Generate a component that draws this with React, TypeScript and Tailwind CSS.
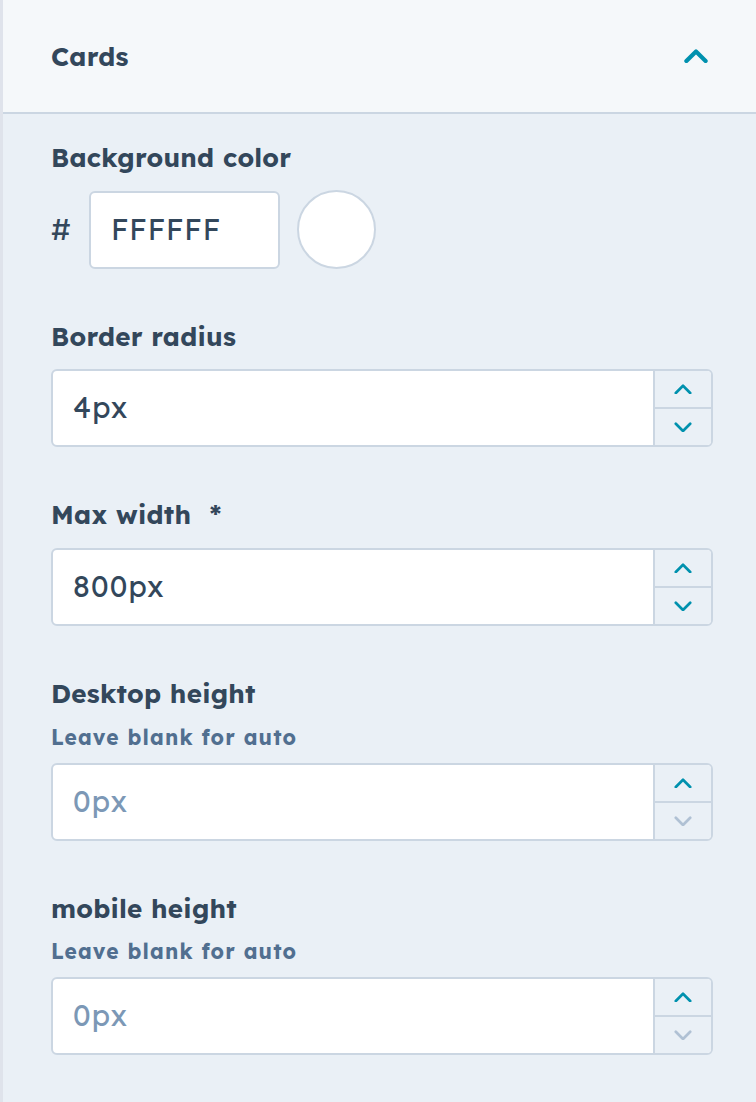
import React from "react";

const Chevron = ({ up, color, size = 18, stroke = 3 }: { up: boolean; color: string; size?: number; stroke?: number }) => (
  <svg width={size} height={size * 0.6} viewBox="0 0 20 12" fill="none">
    <path
      d={up ? "M2 10 L10 2 L18 10" : "M2 2 L10 10 L18 2"}
      stroke={color}
      strokeWidth={stroke}
      strokeLinecap="round"
      strokeLinejoin="round"
    />
  </svg>
);

const NumberInput = ({ value, placeholder, downDisabled }: { value?: string; placeholder?: string; downDisabled?: boolean }) => (
  <div className="flex h-[78px] w-[662px] rounded-[6px] border-2 border-[#cbd6e2] bg-white overflow-hidden">
    <div className="flex flex-1 items-center pl-[20px] text-[29px] tracking-[0.04em]">
      {value ? (
        <span className="text-[#33475b]">{value}</span>
      ) : (
        <span className="text-[#7c98b6]">{placeholder}</span>
      )}
    </div>
    <div className="flex w-[58px] flex-col border-l-2 border-[#cbd6e2] bg-[#eaf0f6]">
      <div className="flex flex-1 items-center justify-center border-b-2 border-[#cbd6e2]">
        <Chevron up color="#0091ae" />
      </div>
      <div className="flex flex-1 items-center justify-center">
        <Chevron up={false} color={downDisabled ? "#b0c1d4" : "#0091ae"} />
      </div>
    </div>
  </div>
);

const Label = ({ children }: { children: React.ReactNode }) => (
  <div className="h-[36px] text-[26px] font-bold leading-[36px] tracking-[0.01em] text-[#33475b]">{children}</div>
);

const Sub = ({ children }: { children: React.ReactNode }) => (
  <div className="h-[28px] text-[21px] font-bold leading-[28px] tracking-[0.055em] text-[#516f90]">{children}</div>
);

export default function App() {
  return (
    <div
      className="flex h-[1102px] w-[756px] flex-col border-l-[3px] border-[#dfe3eb] bg-[#eaf0f6]"
      style={{ fontFamily: "'Lexend Deca', Inter, 'Noto Sans', sans-serif" }}
    >
      <div className="flex h-[114px] shrink-0 items-center justify-between border-b-2 border-[#cbd6e2] bg-[#f5f8fa] pl-[48px] pr-[48px]">
        <span className="text-[26px] font-bold tracking-[0.01em] text-[#33475b]">Cards</span>
        <Chevron up color="#0091ae" size={24} stroke={3.5} />
      </div>
      <div className="flex flex-col pl-[48px] pt-[26px]">
        <Label>Background color</Label>
        <div className="mt-[14px] flex items-center">
          <span className="w-[38px] text-[29px] text-[#33475b]">#</span>
          <div className="flex h-[78px] w-[191px] items-center rounded-[6px] border-2 border-[#cbd6e2] bg-white pl-[20px] text-[29px] tracking-[0.03em] text-[#33475b]">
            FFFFFF
          </div>
          <div className="ml-[17px] h-[79px] w-[79px] rounded-full border-2 border-[#cbd6e2] bg-white" />
        </div>

        <div className="mt-[50px]">
          <Label>Border radius</Label>
        </div>
        <div className="mt-[14px]">
          <NumberInput value="4px" />
        </div>

        <div className="mt-[50px]">
          <Label>
            Max width <span className="ml-[10px]">*</span>
          </Label>
        </div>
        <div className="mt-[15px]">
          <NumberInput value="800px" />
        </div>

        <div className="mt-[50px]">
          <Label>Desktop height</Label>
        </div>
        <div className="mt-[11px]">
          <Sub>Leave blank for auto</Sub>
        </div>
        <div className="mt-[12px]">
          <NumberInput placeholder="0px" downDisabled />
        </div>

        <div className="mt-[50px]">
          <Label>mobile height</Label>
        </div>
        <div className="mt-[10px]">
          <Sub>Leave blank for auto</Sub>
        </div>
        <div className="mt-[12px]">
          <NumberInput placeholder="0px" downDisabled />
        </div>
      </div>
    </div>
  );
}
